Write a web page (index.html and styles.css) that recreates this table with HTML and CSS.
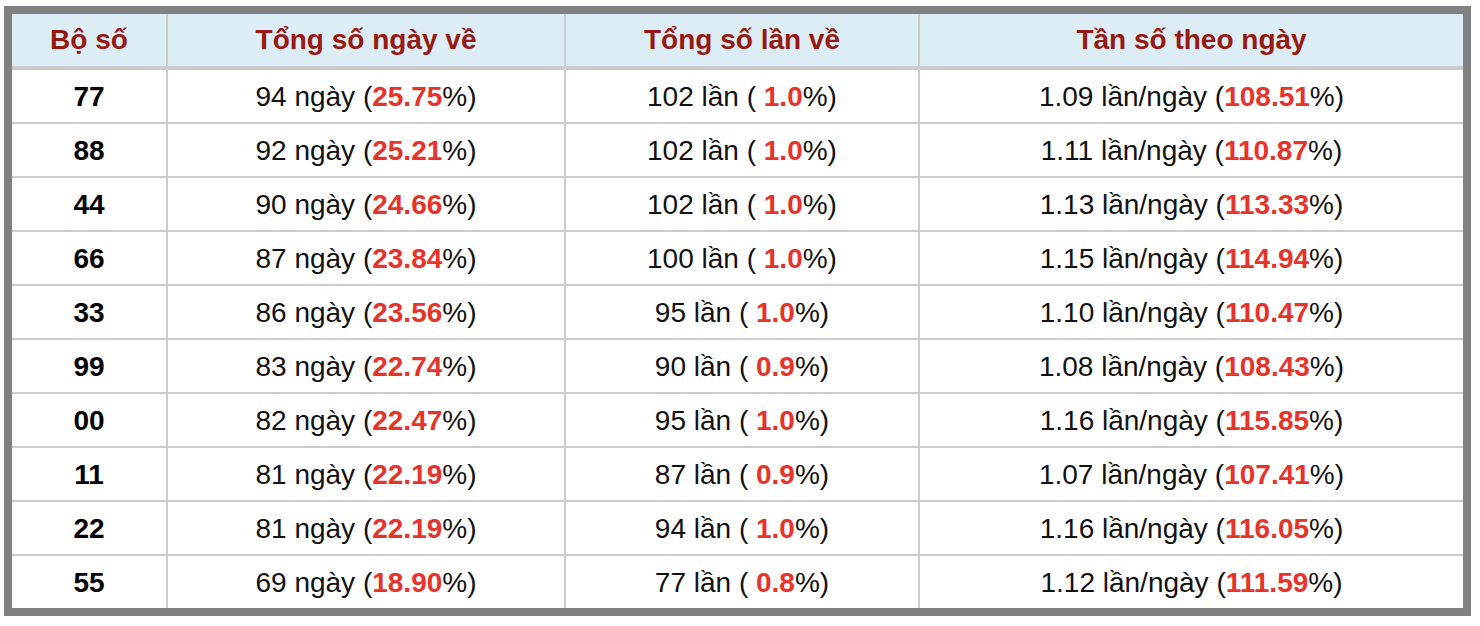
FILE: index.html
```html
<!DOCTYPE html>
<html lang="vi">
<head>
<meta charset="utf-8">
<title>Thống kê bộ số</title>
<link rel="stylesheet" href="styles.css">
</head>
<body>
<table class="stats">
  <thead>
    <tr>
      <th class="c1">Bộ số</th>
      <th class="c2">Tổng số ngày về</th>
      <th class="c3">Tổng số lần về</th>
      <th class="c4">Tần số theo ngày</th>
    </tr>
  </thead>
  <tbody>
    <tr><td class="num">77</td><td>94 ngày (<b>25.75</b>%)</td><td>102 lần ( <b>1.0</b>%)</td><td>1.09 lần/ngày (<b>108.51</b>%)</td></tr>
    <tr><td class="num">88</td><td>92 ngày (<b>25.21</b>%)</td><td>102 lần ( <b>1.0</b>%)</td><td>1.11 lần/ngày (<b>110.87</b>%)</td></tr>
    <tr><td class="num">44</td><td>90 ngày (<b>24.66</b>%)</td><td>102 lần ( <b>1.0</b>%)</td><td>1.13 lần/ngày (<b>113.33</b>%)</td></tr>
    <tr><td class="num">66</td><td>87 ngày (<b>23.84</b>%)</td><td>100 lần ( <b>1.0</b>%)</td><td>1.15 lần/ngày (<b>114.94</b>%)</td></tr>
    <tr><td class="num">33</td><td>86 ngày (<b>23.56</b>%)</td><td>95 lần ( <b>1.0</b>%)</td><td>1.10 lần/ngày (<b>110.47</b>%)</td></tr>
    <tr><td class="num">99</td><td>83 ngày (<b>22.74</b>%)</td><td>90 lần ( <b>0.9</b>%)</td><td>1.08 lần/ngày (<b>108.43</b>%)</td></tr>
    <tr><td class="num">00</td><td>82 ngày (<b>22.47</b>%)</td><td>95 lần ( <b>1.0</b>%)</td><td>1.16 lần/ngày (<b>115.85</b>%)</td></tr>
    <tr><td class="num">11</td><td>81 ngày (<b>22.19</b>%)</td><td>87 lần ( <b>0.9</b>%)</td><td>1.07 lần/ngày (<b>107.41</b>%)</td></tr>
    <tr><td class="num">22</td><td>81 ngày (<b>22.19</b>%)</td><td>94 lần ( <b>1.0</b>%)</td><td>1.16 lần/ngày (<b>116.05</b>%)</td></tr>
    <tr><td class="num">55</td><td>69 ngày (<b>18.90</b>%)</td><td>77 lần ( <b>0.8</b>%)</td><td>1.12 lần/ngày (<b>111.59</b>%)</td></tr>
  </tbody>
</table>
</body>
</html>
```

FILE: styles.css
```css
html, body {
  margin: 0;
  padding: 0;
  background: #ffffff;
}

body {
  font-family: "Liberation Sans", Arial, Helvetica, sans-serif;
  color: #111111;
}

.stats {
  margin: 6px 0 0 4px;
  width: 1467px;
  table-layout: fixed;
  border-collapse: separate;
  border-spacing: 0;
  border: 8px solid #808080;
  font-size: 28px;
}

.stats th,
.stats td {
  box-sizing: border-box;
  padding: 0;
  text-align: center;
  vertical-align: middle;
  border-right: 2px solid #cccccc;
  border-bottom: 2px solid #cccccc;
  white-space: nowrap;
}

.stats th:last-child,
.stats td:last-child {
  border-right: none;
}

.stats tbody tr:last-child td {
  border-bottom: none;
}

.stats th {
  height: 56px;
  line-height: 52px;
  background: #ddedf5;
  color: #961a12;
  font-weight: bold;
  border-bottom: 4px solid #cccccc;
}

.stats td {
  height: 54px;
  line-height: 51px;
  padding-top: 1px;
  background: #ffffff;
}

.stats tbody tr:last-child td {
  height: 52px;
}

.stats .c1 { width: 156px; }
.stats .c2 { width: 398px; }
.stats .c3 { width: 354px; }
.stats .c4 { width: 543px; }

.stats td.num {
  font-weight: bold;
  color: #000000;
}

.stats b {
  color: #e8332a;
  font-weight: bold;
}
```
